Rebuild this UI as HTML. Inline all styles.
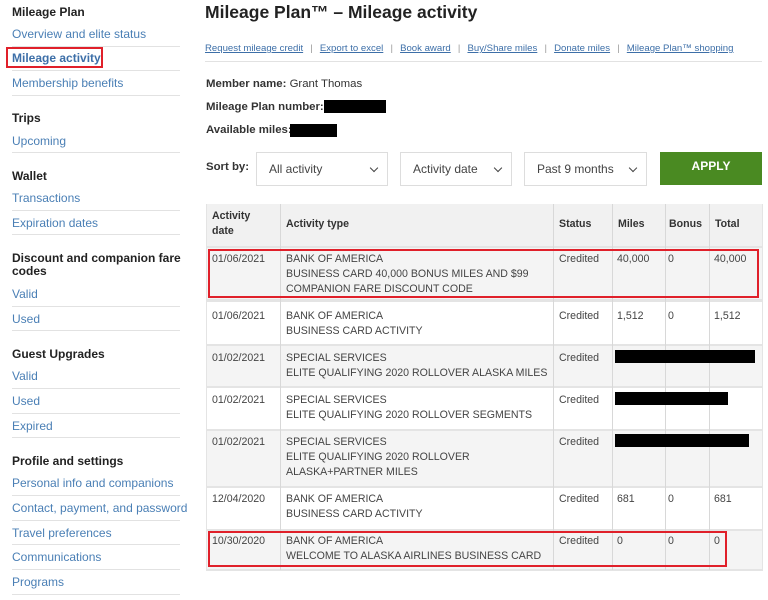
<!DOCTYPE html>
<html><head><meta charset="utf-8"><style>
*{margin:0;padding:0;box-sizing:border-box}
body{width:768px;height:600px;background:#fff;font-family:"Liberation Sans",sans-serif;color:#333;position:relative;overflow:hidden}
.a{position:absolute;white-space:nowrap}
.h{font-weight:bold;font-size:12px;color:#222}
.l{font-size:12px;color:#4a7fb5}
.d{position:absolute;left:12px;width:168px;height:1px;background:#e2e2e2}
.blk{position:absolute;background:#000}
.lk{font-size:9.6px;color:#3d6fa8;text-decoration:underline}
.sep{font-size:9.6px;color:#999}
.sel{position:absolute;top:152px;height:34px;border:1px solid #ddd;font-size:12px;color:#444;padding:9px 0 0 12px}
.sel:after{content:"";position:absolute;right:10px;top:12px;width:5px;height:5px;border-right:1.5px solid #444;border-bottom:1.5px solid #444;transform:rotate(45deg)}
.row{position:absolute;left:206px;width:557px}
.c{position:absolute;font-size:10.6px;color:#444;line-height:15px;white-space:nowrap}
.vl{position:absolute;width:1px;background:#d8d8d8;top:204px;height:366px}
.red{position:absolute;border:2px solid #e0202a}
</style></head><body>
<div class="a h" style="left:12px;top:5px">Mileage Plan</div>
<div class="a l" style="left:12px;top:27px">Overview and elite status</div>
<div class="d" style="top:46px"></div>
<div class="a l" style="left:12px;top:51px;font-weight:bold;color:#3d6fa8">Mileage activity</div>
<div class="red" style="left:6px;top:47px;width:97px;height:21px"></div>
<div class="d" style="top:70px"></div>
<div class="a l" style="left:12px;top:76px">Membership benefits</div>
<div class="d" style="top:95px"></div>
<div class="a h" style="left:12px;top:111px">Trips</div>
<div class="a l" style="left:12px;top:134px">Upcoming</div>
<div class="d" style="top:152px"></div>
<div class="a h" style="left:12px;top:169px">Wallet</div>
<div class="a l" style="left:12px;top:191px">Transactions</div>
<div class="d" style="top:210px"></div>
<div class="a l" style="left:12px;top:216px">Expiration dates</div>
<div class="d" style="top:234px"></div>
<div class="a h" style="left:12px;top:252px;white-space:normal;width:180px;line-height:13px">Discount and companion fare codes</div>
<div class="a l" style="left:12px;top:287px">Valid</div>
<div class="d" style="top:306px"></div>
<div class="a l" style="left:12px;top:312px">Used</div>
<div class="d" style="top:330px"></div>
<div class="a h" style="left:12px;top:347px">Guest Upgrades</div>
<div class="a l" style="left:12px;top:369px">Valid</div>
<div class="d" style="top:388px"></div>
<div class="a l" style="left:12px;top:394px">Used</div>
<div class="d" style="top:413px"></div>
<div class="a l" style="left:12px;top:419px">Expired</div>
<div class="d" style="top:437px"></div>
<div class="a h" style="left:12px;top:454px">Profile and settings</div>
<div class="a l" style="left:12px;top:476px">Personal info and companions</div>
<div class="d" style="top:495px"></div>
<div class="a l" style="left:12px;top:501px">Contact, payment, and password</div>
<div class="d" style="top:520px"></div>
<div class="a l" style="left:12px;top:526px">Travel preferences</div>
<div class="d" style="top:544px"></div>
<div class="a l" style="left:12px;top:550px">Communications</div>
<div class="d" style="top:569px"></div>
<div class="a l" style="left:12px;top:575px">Programs</div>
<div class="d" style="top:594px"></div>

<div class="a" style="left:205px;top:2px;font-size:17.5px;font-weight:bold;color:#222">Mileage Plan™ – Mileage activity</div>
<div class="a" style="left:205px;top:38px">
<span class="lk">Request mileage credit</span> <span class="sep">&nbsp;|&nbsp;</span> <span class="lk">Export to excel</span> <span class="sep">&nbsp;|&nbsp;</span> <span class="lk">Book award</span> <span class="sep">&nbsp;|&nbsp;</span> <span class="lk">Buy/Share miles</span> <span class="sep">&nbsp;|&nbsp;</span> <span class="lk">Donate miles</span> <span class="sep">&nbsp;|&nbsp;</span> <span class="lk">Mileage Plan™ shopping</span></div>
<div style="position:absolute;left:205px;top:61px;width:557px;height:1px;background:#e2e2e2"></div>
<div class="a" style="left:206px;top:78px;font-size:11.4px"><b>Member name:</b> Grant Thomas</div>
<div class="a" style="left:206px;top:101px;font-size:11.4px"><b>Mileage Plan number:</b></div>
<div class="blk" style="left:324px;top:100px;width:62px;height:13px"></div>
<div class="a" style="left:206px;top:124px;font-size:11.4px"><b>Available miles:</b></div>
<div class="blk" style="left:290px;top:124px;width:47px;height:13px"></div>
<div class="a" style="left:206px;top:161px;font-size:11.4px;font-weight:bold">Sort by:</div>
<div class="sel" style="left:256px;width:132px">All activity</div>
<div class="sel" style="left:400px;width:112px">Activity date</div>
<div class="sel" style="left:524px;width:123px">Past 9 months</div>
<div class="a" style="left:660px;top:152px;width:102px;height:33px;background:#4a8a22;color:#fff;font-weight:bold;font-size:12px;text-align:center;line-height:28px">APPLY</div>

<div class="row" style="top:204px;height:43px;background:#f1f1f1"></div>
<div class="row" style="top:247px;height:52px;background:#f4f4f4"></div>
<div class="row" style="top:299px;height:3px;background:#e4e4e4"></div>
<div class="row" style="top:302px;height:42px;background:#fff"></div>
<div class="row" style="top:344px;height:42px;background:#f4f4f4;border-top:2px solid #e4e4e4"></div>
<div class="row" style="top:386px;height:43px;background:#fff;border-top:2px solid #e4e4e4"></div>
<div class="row" style="top:429px;height:57px;background:#f4f4f4;border-top:2px solid #e4e4e4"></div>
<div class="row" style="top:486px;height:43px;background:#fff;border-top:2px solid #e4e4e4"></div>
<div class="row" style="top:529px;height:42px;background:#f4f4f4;border-top:2px solid #e4e4e4;border-bottom:2px solid #e4e4e4"></div>
<div class="row" style="top:246px;height:2px;background:#e4e4e4"></div>
<div class="vl" style="left:206px;background:#e4e4e4"></div>
<div class="vl" style="left:280px"></div>
<div class="vl" style="left:553px"></div>
<div class="vl" style="left:612px"></div>
<div class="vl" style="left:665px"></div>
<div class="vl" style="left:709px"></div>
<div class="vl" style="left:762px;background:#e4e4e4"></div>

<div class="c" style="left:212px;top:209px;font-weight:bold;color:#333">Activity<br>date</div>
<div class="c" style="left:286px;top:217px;font-weight:bold;color:#333">Activity type</div>
<div class="c" style="left:559px;top:217px;font-weight:bold;color:#333">Status</div>
<div class="c" style="left:618px;top:217px;font-weight:bold;color:#333">Miles</div>
<div class="c" style="left:669px;top:217px;font-weight:bold;color:#333">Bonus</div>
<div class="c" style="left:715px;top:217px;font-weight:bold;color:#333">Total</div>

<div class="c" style="left:212px;top:252px">01/06/2021</div>
<div class="c" style="left:286px;top:252px">BANK OF AMERICA<br>BUSINESS CARD 40,000 BONUS MILES AND $99<br>COMPANION FARE DISCOUNT CODE</div>
<div class="c" style="left:559px;top:252px">Credited</div>
<div class="c" style="left:617px;top:252px">40,000</div>
<div class="c" style="left:668px;top:252px">0</div>
<div class="c" style="left:714px;top:252px">40,000</div>
<div class="red" style="left:208px;top:249px;width:551px;height:49px"></div>

<div class="c" style="left:212px;top:309px">01/06/2021</div>
<div class="c" style="left:286px;top:309px">BANK OF AMERICA<br>BUSINESS CARD ACTIVITY</div>
<div class="c" style="left:559px;top:309px">Credited</div>
<div class="c" style="left:617px;top:309px">1,512</div>
<div class="c" style="left:668px;top:309px">0</div>
<div class="c" style="left:714px;top:309px">1,512</div>

<div class="c" style="left:212px;top:351px">01/02/2021</div>
<div class="c" style="left:286px;top:351px">SPECIAL SERVICES<br>ELITE QUALIFYING 2020 ROLLOVER ALASKA MILES</div>
<div class="c" style="left:559px;top:351px">Credited</div>
<div class="blk" style="left:615px;top:350px;width:140px;height:13px"></div>

<div class="c" style="left:212px;top:393px">01/02/2021</div>
<div class="c" style="left:286px;top:393px">SPECIAL SERVICES<br>ELITE QUALIFYING 2020 ROLLOVER SEGMENTS</div>
<div class="c" style="left:559px;top:393px">Credited</div>
<div class="blk" style="left:615px;top:392px;width:113px;height:13px"></div>

<div class="c" style="left:212px;top:435px">01/02/2021</div>
<div class="c" style="left:286px;top:435px">SPECIAL SERVICES<br>ELITE QUALIFYING 2020 ROLLOVER<br>ALASKA+PARTNER MILES</div>
<div class="c" style="left:559px;top:435px">Credited</div>
<div class="blk" style="left:615px;top:434px;width:134px;height:13px"></div>

<div class="c" style="left:212px;top:492px">12/04/2020</div>
<div class="c" style="left:286px;top:492px">BANK OF AMERICA<br>BUSINESS CARD ACTIVITY</div>
<div class="c" style="left:559px;top:492px">Credited</div>
<div class="c" style="left:617px;top:492px">681</div>
<div class="c" style="left:668px;top:492px">0</div>
<div class="c" style="left:714px;top:492px">681</div>

<div class="c" style="left:212px;top:534px">10/30/2020</div>
<div class="c" style="left:286px;top:534px">BANK OF AMERICA<br>WELCOME TO ALASKA AIRLINES BUSINESS CARD</div>
<div class="c" style="left:559px;top:534px">Credited</div>
<div class="c" style="left:617px;top:534px">0</div>
<div class="c" style="left:668px;top:534px">0</div>
<div class="c" style="left:714px;top:534px">0</div>
<div class="red" style="left:208px;top:531px;width:519px;height:36px"></div>
</body></html>
